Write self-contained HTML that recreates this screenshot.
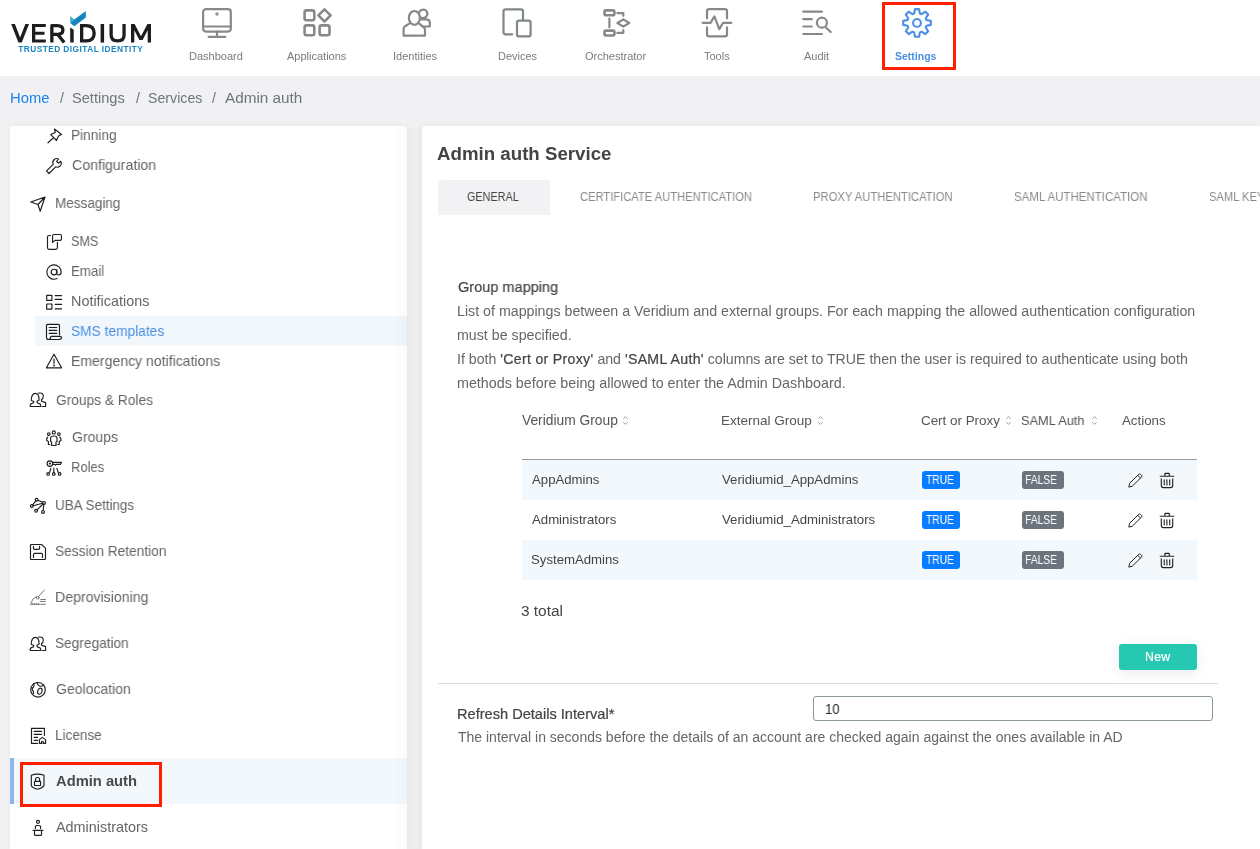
<!DOCTYPE html>
<html><head><meta charset="utf-8"><style>
html,body{margin:0;padding:0;width:1260px;height:849px;overflow:hidden;background:#f1f1f3;font-family:"Liberation Sans", sans-serif;}
.t{position:absolute;white-space:nowrap;line-height:1;will-change:transform;}
.r{position:absolute;}
.i{position:absolute;overflow:visible;}
</style></head><body>
<div class="r" style="left:0px;top:0px;width:1260px;height:76px;background:#ffffff;"></div>
<div class="r" style="left:0px;top:76px;width:1260px;height:773px;background:#f1f1f3;"></div>
<div class="r" style="left:407px;top:128px;width:15px;height:721px;background:#ededee;"></div>
<div class="r" style="left:10px;top:126px;width:397px;height:723px;background:#ffffff;border-radius:3px 3px 0 0;box-shadow:0 0 7px rgba(0,0,0,0.045);"></div>
<div class="r" style="left:422px;top:126px;width:838px;height:723px;background:#ffffff;border-radius:3px 0 0 0;box-shadow:0 0 7px rgba(0,0,0,0.045);"></div>
<svg class="i" style="left:0;top:0;will-change:transform" width="170" height="76" viewBox="0 0 170 76">
<g fill="#1d1d1f">
<path d="M11.2 24 H14.9 L20.1 37.6 L25.4 24 H29 L21.8 42.6 H18.4 Z"/>
<path d="M32 24 H45.8 V27 H35.3 V31.8 H44.5 V34.8 H35.3 V39.6 H45.8 V42.6 H32 Z"/>
<path d="M70.2 27.5 L73.7 29.8 V42.6 H70.2 Z"/>
<path d="M100.6 24 H104.1 V42.6 H100.6 Z"/>
<path d="M131 42.6 V24 H134.6 L141 36.3 L147.4 24 H151 V42.6 H147.7 V30.2 L142.6 40 H139.4 L134.3 30.2 V42.6 Z"/>
</g>
<g fill="none" stroke="#1d1d1f" stroke-width="3.3" stroke-linejoin="miter">
<path d="M51.85 42.6 V25.65 H57.3 Q62.9 25.65 62.9 30.1 Q62.9 34.4 57.3 34.4 H51.85 M57.8 34.4 L64.2 42.6" stroke-linejoin="round"/>
<path d="M81.65 25.65 H86 Q94.15 25.65 94.15 33.3 Q94.15 40.95 86 40.95 H81.65 Z"/>
<path d="M111.15 24 V35 Q111.15 40.95 117.6 40.95 Q124.05 40.95 124.05 35 V24"/>
</g>
<path d="M70.2 15.9 L74.3 19.6 L70.2 23 Z" fill="#35b2c8"/>
<path d="M70.2 23 L74.3 26.2 L85.8 17.6 V11.1 L74.3 19.6 Z" fill="#1683c0"/>
<text x="18.2" y="51.8" font-family="Liberation Sans" font-weight="700" font-size="8.3" fill="#1a86c0" textLength="124.6" lengthAdjust="spacing">TRUSTED DIGITAL IDENTITY</text>
</svg>
<svg class="i" style="left:192px;top:2px;" width="50" height="40" viewBox="0 0 50 40" fill="none" stroke="#888888" stroke-width="2.2" stroke-linecap="round" stroke-linejoin="round"><rect x="11.1" y="7.1" width="27.7" height="22.5" rx="3"/><path d="M11.1 24.5 H38.8 M25 29.6 V34.6 M16.7 34.8 H33.3"/><circle cx="25" cy="12" r="0.6" fill="#888888"/></svg>
<svg class="i" style="left:292px;top:2px;" width="50" height="40" viewBox="0 0 50 40" fill="none" stroke="#888888" stroke-width="2.2" stroke-linecap="round" stroke-linejoin="round"><g stroke-width="2.6"><rect x="12.6" y="8.4" width="9.7" height="9.9" rx="2"/><rect x="12.6" y="23.4" width="9.7" height="9.9" rx="2"/><rect x="27.6" y="23.4" width="9.9" height="9.9" rx="2"/><path d="M32.5 7.3 L38.6 13.4 L32.5 19.5 L26.4 13.4 Z"/></g></svg>
<svg class="i" style="left:395px;top:2px;" width="50" height="40" viewBox="0 0 50 40" fill="none" stroke="#888888" stroke-width="2.2" stroke-linecap="round" stroke-linejoin="round"><ellipse cx="19.4" cy="15.9" rx="5.5" ry="6.9"/><path d="M14.3 21.6 L10 24.3 Q8.6 25.3 8.6 27 V33.6 H30 V27.5 Q30 26.4 29 25.6 L24.6 21.9"/><path d="M24.2 10.4 A4.2 4.2 0 1 1 26.7 15.7 M26.3 17.3 H31.5 Q34.8 17.6 34.8 20.6 V24.5 H28.3"/></svg>
<svg class="i" style="left:495px;top:2px;" width="50" height="40" viewBox="0 0 50 40" fill="none" stroke="#80868a" stroke-width="2.2" stroke-linecap="round" stroke-linejoin="round"><path d="M17.2 32.3 H10.6 Q8.5 32.3 8.5 30.2 V9.4 Q8.5 7.3 10.6 7.3 H25.9 Q28 7.3 28 9.4 V17.5"/><rect x="22" y="18.6" width="13.6" height="15.8" rx="2"/></svg>
<svg class="i" style="left:595px;top:2px;" width="50" height="40" viewBox="0 0 50 40" fill="none" stroke="#888888" stroke-width="2.2" stroke-linecap="round" stroke-linejoin="round"><rect x="9.5" y="8.4" width="9.9" height="4.9" rx="1.5" stroke-width="2.6"/><rect x="9.5" y="28.6" width="9.9" height="4.9" rx="1.5" stroke-width="2.6"/><path d="M14.4 16.6 V25.3 M22.4 11.1 H28.3 V13.8 M28.3 28 V30.9 H22.4 M28.3 17.4 L34.2 21 L28.3 24.6 L22.4 21 Z"/></svg>
<svg class="i" style="left:692px;top:2px;" width="50" height="40" viewBox="0 0 50 40" fill="none" stroke="#888888" stroke-width="2.2" stroke-linecap="round" stroke-linejoin="round"><path d="M15 16.3 V9.3 Q15 7.1 17.2 7.1 H32.8 Q35 7.1 35 9.3 V16.3 M15 25.4 V32.2 Q15 34.4 17.2 34.4 H32.8 Q35 34.4 35 32.2 V25.4 M10.6 20.8 H18.6 L22.4 14.4 L27.3 27.1 L31.1 20.8 H39.3"/></svg>
<svg class="i" style="left:792px;top:2px;" width="50" height="40" viewBox="0 0 50 40" fill="none" stroke="#888888" stroke-width="2.2" stroke-linecap="round" stroke-linejoin="round"><path d="M11.3 9.7 H29.9 M11.3 17.2 H19.8 M11.3 24.5 H19.8 M11.3 32 H29.9 M34.2 25.7 L38.7 30"/><circle cx="29.9" cy="20.7" r="5"/></svg>
<svg class="i" style="left:892px;top:2px;" width="50" height="40" viewBox="0 0 50 40" fill="none" stroke="#4a90e2" stroke-width="2.1" stroke-linecap="round" stroke-linejoin="round"><path d="M22.10 11.43 L23.00 7.10 L27.00 7.10 L27.90 11.43 L29.64 12.16 L33.34 9.73 L36.17 12.56 L33.74 16.26 L34.47 18.00 L38.80 18.90 L38.80 22.90 L34.47 23.80 L33.74 25.54 L36.17 29.24 L33.34 32.07 L29.64 29.64 L27.90 30.37 L27.00 34.70 L23.00 34.70 L22.10 30.37 L20.36 29.64 L16.66 32.07 L13.83 29.24 L16.26 25.54 L15.53 23.80 L11.20 22.90 L11.20 18.90 L15.53 18.00 L16.26 16.26 L13.83 12.56 L16.66 9.73 L20.36 12.16 Z"/><circle cx="25" cy="20.9" r="3.9"/></svg>
<div class="t" style="left:189.18px;top:41px;font-size:11px;line-height:30px;color:#7b7b7b;">Dashboard</div>
<div class="t" style="left:287.24px;top:41px;font-size:11px;line-height:30px;color:#7b7b7b;">Applications</div>
<div class="t" style="left:392.76px;top:41px;font-size:11px;line-height:30px;color:#7b7b7b;">Identities</div>
<div class="t" style="left:497.58px;top:41px;font-size:11px;line-height:30px;color:#7b7b7b;">Devices</div>
<div class="t" style="left:585.37px;top:41px;font-size:11px;line-height:30px;color:#7b7b7b;">Orchestrator</div>
<div class="t" style="left:704.26px;top:41px;font-size:11px;line-height:30px;color:#7b7b7b;">Tools</div>
<div class="t" style="left:804.44px;top:41px;font-size:11px;line-height:30px;color:#7b7b7b;">Audit</div>
<div class="t" style="left:895.35px;top:41px;font-size:10.5px;line-height:30px;color:#4a90e2;font-weight:700;">Settings</div>
<div class="r" style="left:882px;top:2px;width:74px;height:68px;background:transparent;border:3px solid #ff1e00;box-sizing:border-box;"></div>
<div class="t" style="left:10.33px;top:83px;font-size:14.8px;line-height:30px;color:#1a82f7;">Home</div>
<div class="t" style="left:60.07px;top:83px;font-size:14.2px;line-height:30px;color:#6c757d;">/</div>
<div class="t" style="left:71.82px;top:83px;font-size:14.6px;line-height:30px;color:#6c757d;">Settings</div>
<div class="t" style="left:135.87px;top:83px;font-size:14.2px;line-height:30px;color:#6c757d;">/</div>
<div class="t" style="left:147.65px;top:83px;font-size:14.2px;line-height:30px;color:#6c757d;">Services</div>
<div class="t" style="left:212.27px;top:83px;font-size:14.2px;line-height:30px;color:#6c757d;">/</div>
<div class="t" style="left:224.58px;top:83px;font-size:15.3px;line-height:30px;color:#6c757d;">Admin auth</div>
<div class="r" style="left:35px;top:316px;width:372px;height:30px;background:#f2f7fc;"></div>
<div class="r" style="left:10px;top:758px;width:397px;height:46px;background:#f3f8fc;"></div>
<div class="r" style="left:10px;top:758px;width:4px;height:46px;background:#8db8ee;"></div>
<div class="r" style="left:393px;top:126px;width:14px;height:723px;background:linear-gradient(to right, rgba(0,0,0,0), rgba(0,0,0,0.018));"></div>
<div class="t" style="left:71.4px;top:120px;font-size:14.4px;line-height:30px;color:#656565;transform:scaleX(0.951);transform-origin:0 0;">Pinning</div>
<div class="t" style="left:71.82px;top:150px;font-size:14.4px;line-height:30px;color:#656565;transform:scaleX(0.983);transform-origin:0 0;">Configuration</div>
<div class="t" style="left:55.0px;top:188px;font-size:14.4px;line-height:30px;color:#656565;transform:scaleX(0.939);transform-origin:0 0;">Messaging</div>
<div class="t" style="left:71.0px;top:226px;font-size:14.4px;line-height:30px;color:#656565;transform:scaleX(0.88);transform-origin:0 0;">SMS</div>
<div class="t" style="left:71.0px;top:256px;font-size:14.4px;line-height:30px;color:#656565;transform:scaleX(0.925);transform-origin:0 0;">Email</div>
<div class="t" style="left:71.0px;top:286px;font-size:14.4px;line-height:30px;color:#656565;transform:scaleX(0.996);transform-origin:0 0;">Notifications</div>
<div class="t" style="left:70.69px;top:316px;font-size:14.4px;line-height:30px;color:#4a90e2;transform:scaleX(0.955);transform-origin:0 0;">SMS templates</div>
<div class="t" style="left:71.0px;top:346px;font-size:14.4px;line-height:30px;color:#656565;transform:scaleX(0.977);transform-origin:0 0;">Emergency notifications</div>
<div class="t" style="left:56.26px;top:385px;font-size:14.4px;line-height:30px;color:#656565;transform:scaleX(0.954);transform-origin:0 0;">Groups &amp; Roles</div>
<div class="t" style="left:71.83px;top:422px;font-size:14.4px;line-height:30px;color:#656565;transform:scaleX(0.974);transform-origin:0 0;">Groups</div>
<div class="t" style="left:71.42px;top:452px;font-size:14.4px;line-height:30px;color:#656565;transform:scaleX(0.904);transform-origin:0 0;">Roles</div>
<div class="t" style="left:55.05px;top:490px;font-size:14.4px;line-height:30px;color:#656565;transform:scaleX(0.933);transform-origin:0 0;">UBA Settings</div>
<div class="t" style="left:55.0px;top:536px;font-size:14.4px;line-height:30px;color:#656565;transform:scaleX(0.955);transform-origin:0 0;">Session Retention</div>
<div class="t" style="left:55.0px;top:582px;font-size:14.4px;line-height:30px;color:#656565;transform:scaleX(0.981);transform-origin:0 0;">Deprovisioning</div>
<div class="t" style="left:55.2px;top:628px;font-size:14.4px;line-height:30px;color:#656565;transform:scaleX(0.95);transform-origin:0 0;">Segregation</div>
<div class="t" style="left:55.63px;top:674px;font-size:14.4px;line-height:30px;color:#656565;transform:scaleX(0.975);transform-origin:0 0;">Geolocation</div>
<div class="t" style="left:55.2px;top:720px;font-size:14.4px;line-height:30px;color:#656565;transform:scaleX(0.941);transform-origin:0 0;">License</div>
<div class="t" style="left:56.15px;top:812px;font-size:14.4px;line-height:30px;color:#656565;">Administrators</div>
<div class="t" style="left:55.9px;top:766px;font-size:14.6px;line-height:30px;color:#4a4a4a;font-weight:700;transform:scaleX(1.009);transform-origin:0 0;">Admin auth</div>
<div class="r" style="left:20px;top:762px;width:142px;height:45px;background:transparent;border:3px solid #ff1e00;box-sizing:border-box;"></div>
<svg class="i" style="left:45.5px;top:127px;" width="18" height="18" viewBox="0 0 18 18" fill="none" stroke="#1e1e1e" stroke-width="1.15" stroke-linecap="round" stroke-linejoin="round"><path d="M8.5 2 L15.5 7.5 L12.5 9 L10.5 13.5 L4.8 7.6 L9.2 5.5 Z M7.5 10.8 L2 15.8"/></svg>
<svg class="i" style="left:45px;top:157px;" width="18" height="18" viewBox="0 0 18 18" fill="none" stroke="#1e1e1e" stroke-width="1.15" stroke-linecap="round" stroke-linejoin="round"><path d="M1.5 13.8 L8.2 7.3 A4 4 0 0 1 13.6 2 L11.6 4.6 L13.3 6.2 L15.8 4.3 A4 4 0 0 1 10.6 9.8 L4 16.5 Z"/></svg>
<svg class="i" style="left:29px;top:195px;" width="18" height="18" viewBox="0 0 18 18" fill="none" stroke="#1e1e1e" stroke-width="1.15" stroke-linecap="round" stroke-linejoin="round"><path d="M1.8 7 L16 2 L11.2 16.2 L9 9.5 Z M9 9.5 L16 2"/></svg>
<svg class="i" style="left:45px;top:232px;" width="18" height="18" viewBox="0 0 18 18" fill="none" stroke="#1e1e1e" stroke-width="1.15" stroke-linecap="round" stroke-linejoin="round"><path d="M5.5 3.5 H4 Q2.5 3.5 2.5 5 V15.8 Q2.5 17.3 4 17.3 H11 Q12.4 17.3 12.4 15.8 V10.3"/><path d="M7.6 10.4 V4 Q7.6 2.5 9 2.5 H15 Q16.5 2.5 16.5 4 V7 Q16.5 8.4 15 8.4 H10 L7.6 10.4 Z"/></svg>
<svg class="i" style="left:45px;top:263px;" width="18" height="18" viewBox="0 0 18 18" fill="none" stroke="#1e1e1e" stroke-width="1.15" stroke-linecap="round" stroke-linejoin="round"><circle cx="9" cy="9" r="2.8"/><path d="M11.8 6.5 V10.5 Q11.8 12 13.3 12 Q16.2 12 16.2 9 A7.2 7.2 0 1 0 12 15.6"/></svg>
<svg class="i" style="left:45px;top:293px;" width="18" height="18" viewBox="0 0 18 18" fill="none" stroke="#1e1e1e" stroke-width="1.15" stroke-linecap="round" stroke-linejoin="round"><rect x="1.7" y="2.4" width="5.2" height="5"/><rect x="1.7" y="11" width="5.2" height="5.1"/><path d="M10.2 2.6 H16.6 M10.2 6.4 H16.6 M10.2 11.3 H16.6 M10.2 15.8 H16.6"/></svg>
<svg class="i" style="left:45px;top:323px;" width="18" height="18" viewBox="0 0 18 18" fill="none" stroke="#1e1e1e" stroke-width="1.15" stroke-linecap="round" stroke-linejoin="round"><path d="M1.5 14.5 V2.4 Q1.5 1.4 2.5 1.4 H13.5 Q14.5 1.4 14.5 2.4 V11.7 M4.2 4.5 H11.7 M4.2 7.4 H11.7 M4.2 10.4 H11.7 M1.5 14.5 Q1.5 16.5 3.5 16.5 H14 Q16.5 16.5 16.5 14.3 Q16.5 13.3 15 13.3 H6.5 Q5.5 13.3 5.5 14.5 Q5.5 16.5 3.5 16.5"/></svg>
<svg class="i" style="left:45px;top:352px;" width="18" height="18" viewBox="0 0 18 18" fill="none" stroke="#1e1e1e" stroke-width="1.15" stroke-linecap="round" stroke-linejoin="round"><path d="M9 2.2 L16.6 15.8 H1.4 Z M9 7 V11.5"/><circle cx="9" cy="13.5" r="0.4"/></svg>
<svg class="i" style="left:29px;top:391px;" width="18" height="18" viewBox="0 0 18 18" fill="none" stroke="#1e1e1e" stroke-width="1.15" stroke-linecap="round" stroke-linejoin="round"><path d="M2.3 9.5 Q2.3 2.4 6.4 2.4 Q10.1 2.4 10.1 9.1 M2.3 9.5 L4.8 10.5 V11 Q4.8 12.2 3.3 12.4 Q1.2 12.8 1.2 14.3 V15.5 H11.7 V14.3 Q11.7 12.8 9.6 12.4 Q8 12.2 8 11 V10.3 L10.1 9.1 M9.7 2.1 Q14.3 1.3 14.3 5.2 Q14.3 7.5 12.5 8.4 V10.2 L16.6 11.6 V15.5 H13.3"/></svg>
<svg class="i" style="left:45px;top:429px;" width="18" height="18" viewBox="0 0 18 18" fill="none" stroke="#1e1e1e" stroke-width="1.15" stroke-linecap="round" stroke-linejoin="round"><circle cx="8.8" cy="3.4" r="1.6"/><circle cx="3.8" cy="5" r="1.3"/><circle cx="13.9" cy="5" r="1.3"/><path d="M5.6 9 Q5.6 7 8.8 7 Q12 7 12 9 V12.5 L11 13 V16.5 H6.6 V13 L5.6 12.5 Z M2.8 8 Q1.3 9.5 1.6 11.5 L3.4 12.5 V15.5 H4.8 M14.8 8 Q16.3 9.5 16 11.5 L14.2 12.5 V15.5 H12.8"/></svg>
<svg class="i" style="left:45px;top:459px;" width="18" height="18" viewBox="0 0 18 18" fill="none" stroke="#1e1e1e" stroke-width="1.15" stroke-linecap="round" stroke-linejoin="round"><circle cx="4.9" cy="4.6" r="2.8"/><circle cx="4.9" cy="4.6" r="0.5" fill="#1e1e1e"/><path d="M7.6 3.3 H16.5 L15.5 5.3 H11.2 L10.4 6.1 L9.7 5.4 H7.6 M5.9 9.4 L4.6 13.4 M8.8 9 V13.4 M11.9 9.4 L13.2 13.4"/><circle cx="3.1" cy="14.9" r="1.3"/><circle cx="8.8" cy="14.9" r="1.3"/><circle cx="14.6" cy="14.9" r="1.3"/></svg>
<svg class="i" style="left:29px;top:497px;" width="18" height="18" viewBox="0 0 18 18" fill="none" stroke="#1e1e1e" stroke-width="1.15" stroke-linecap="round" stroke-linejoin="round"><circle cx="7.6" cy="2.7" r="1.4"/><circle cx="15" cy="5.9" r="1.4"/><circle cx="2.8" cy="9" r="1.4"/><circle cx="7.1" cy="13.8" r="1.4"/><circle cx="14" cy="14.9" r="1.4"/><path d="M8.9 3.3 L13.6 5.3 M6.8 3.9 L3.6 7.9 M4.2 8.7 L13.6 6.2 M14 7 L8.1 12.8 M14.9 7.3 L14.1 13.5"/></svg>
<svg class="i" style="left:29px;top:543px;" width="18" height="18" viewBox="0 0 18 18" fill="none" stroke="#1e1e1e" stroke-width="1.15" stroke-linecap="round" stroke-linejoin="round"><path d="M2.5 1.5 H12.5 L16.5 5.2 V15.5 Q16.5 16.5 15.5 16.5 H2.5 Q1.5 16.5 1.5 15.5 V2.5 Q1.5 1.5 2.5 1.5 Z M4.5 3.2 V5.5 Q4.5 6.3 5.5 6.3 H9.6 Q10.6 6.3 10.6 5.5 V3.2 M4.5 14.5 V11.4 Q4.5 10.4 5.5 10.4 H12.5 Q13.5 10.4 13.5 11.4 V14.5"/></svg>
<svg class="i" style="left:29px;top:589px;" width="18" height="18" viewBox="0 0 18 18" fill="none" stroke="#777" stroke-width="1.0" stroke-linecap="round" stroke-linejoin="round"><path d="M15.4 1.1 L9.7 7.3 M7.6 7.5 Q3 9 1.9 14.2 M1.6 15.3 H10.8 M3.2 14.3 V15.3 M5.2 14.3 V15.3 M7.2 14.3 V15.3 M9.2 14.3 V15.3 M11.8 10.5 H16.4 M11.2 12.4 H16.4 M11.8 15.3 H16.4"/><circle cx="8.7" cy="8.7" r="1.4"/></svg>
<svg class="i" style="left:29px;top:635px;" width="18" height="18" viewBox="0 0 18 18" fill="none" stroke="#1e1e1e" stroke-width="1.15" stroke-linecap="round" stroke-linejoin="round"><path d="M2.3 9.5 Q2.3 2.4 6.4 2.4 Q10.1 2.4 10.1 9.1 M2.3 9.5 L4.8 10.5 V11 Q4.8 12.2 3.3 12.4 Q1.2 12.8 1.2 14.3 V15.5 H11.7 V14.3 Q11.7 12.8 9.6 12.4 Q8 12.2 8 11 V10.3 L10.1 9.1 M9.7 2.1 Q14.3 1.3 14.3 5.2 Q14.3 7.5 12.5 8.4 V10.2 L16.6 11.6 V15.5 H13.3"/></svg>
<svg class="i" style="left:29px;top:681px;" width="18" height="18" viewBox="0 0 18 18" fill="none" stroke="#1e1e1e" stroke-width="1.15" stroke-linecap="round" stroke-linejoin="round"><circle cx="9" cy="8.8" r="7.3"/><path d="M8 1.7 Q9 5 11 5.2 Q13.5 5.3 14.8 3.8 M4.7 2.6 Q5.8 4.5 4.5 6 Q2.5 7.5 3.5 9 Q4.8 10 4.5 12.5"/><ellipse cx="10.9" cy="10.2" rx="2.1" ry="3.1" transform="rotate(20 10.9 10.2)"/></svg>
<svg class="i" style="left:29px;top:727px;" width="18" height="18" viewBox="0 0 18 18" fill="none" stroke="#1e1e1e" stroke-width="1.15" stroke-linecap="round" stroke-linejoin="round"><path d="M8.5 16.4 H2.5 V1.4 H15.4 V8.4 M5.2 4.4 H12.6 M5.2 7.4 H12.6 M5.2 10.4 H8.5 M5.2 13.4 H8.5 M10.4 16.4 V12.6 L13.4 10.4 L16.6 12.6 V16.4 H14.2 V14.6 Q13.4 13.8 12.6 14.6 V16.4 Z"/></svg>
<svg class="i" style="left:29px;top:772px;" width="18" height="18" viewBox="0 0 18 18" fill="none" stroke="#1e1e1e" stroke-width="1.15" stroke-linecap="round" stroke-linejoin="round"><path d="M2.3 3.3 Q8.5 0.8 15 3.3 V13.3 Q14 16 8.6 17.2 Q3 16 2.3 13.3 Z M6.5 9.4 V7.5 Q6.5 5.5 8.6 5.5 Q10.6 5.5 10.6 7.5 V9.4"/><rect x="5.5" y="9.4" width="6.1" height="4.1" rx="0.6"/></svg>
<svg class="i" style="left:29px;top:818px;" width="18" height="18" viewBox="0 0 18 18" fill="none" stroke="#1e1e1e" stroke-width="1.15" stroke-linecap="round" stroke-linejoin="round"><circle cx="9" cy="3.8" r="1.5"/><path d="M6.4 10.5 V8.5 Q6.4 7.5 8 7.5 H10 Q11.6 7.5 11.6 8.5 V10.5 M4.1 12.4 H13.8 M5.5 12.4 V16.4 Q5.5 17.4 6.5 17.4 H11.5 Q12.5 17.4 12.5 16.4 V12.4"/></svg>
<div class="t" style="left:437.21px;top:139px;font-size:18.7px;line-height:30px;color:#444;font-weight:700;">Admin auth Service</div>
<div class="r" style="left:438px;top:180px;width:112px;height:35px;background:#f2f2f4;border-radius:3px 3px 0 0;"></div>
<div class="t" style="left:467.39px;top:182px;font-size:12px;line-height:30px;color:#444;transform:scaleX(0.902);transform-origin:0 0;">GENERAL</div>
<div class="t" style="left:580.04px;top:182px;font-size:12px;line-height:30px;color:#8a8a8a;transform:scaleX(0.931);transform-origin:0 0;">CERTIFICATE AUTHENTICATION</div>
<div class="t" style="left:812.7px;top:182px;font-size:12px;line-height:30px;color:#8a8a8a;transform:scaleX(0.937);transform-origin:0 0;">PROXY AUTHENTICATION</div>
<div class="t" style="left:1013.66px;top:182px;font-size:12px;line-height:30px;color:#8a8a8a;transform:scaleX(0.958);transform-origin:0 0;">SAML AUTHENTICATION</div>
<div class="t" style="left:1208.66px;top:182px;font-size:12px;line-height:30px;color:#8a8a8a;transform:scaleX(0.93);transform-origin:0 0;">SAML KEYS</div>
<div class="t" style="left:458.26px;top:272px;font-size:14.6px;line-height:30px;color:#444;-webkit-text-stroke:0.22px #444;transform:scaleX(0.995);transform-origin:0 0;">Group mapping</div>
<div class="t" style="left:456.78px;top:296px;font-size:14.23px;line-height:30px;color:#63666a;">List of mappings between a Veridium and external groups. For each mapping the allowed authentication configuration</div>
<div class="t" style="left:457.08px;top:320px;font-size:14.23px;line-height:30px;color:#63666a;">must be specified.</div>
<div class="t" style="left:457.46px;top:344px;font-size:14.15px;line-height:30px;color:#63666a;">If both <span style='color:#444;-webkit-text-stroke:0.22px #444;letter-spacing:0.3px'>'Cert or Proxy'</span> and <span style='color:#444;-webkit-text-stroke:0.22px #444;letter-spacing:0.3px'>'SAML Auth'</span> columns are set to TRUE then the user is required to authenticate using both</div>
<div class="t" style="left:457.08px;top:368px;font-size:14.3px;line-height:30px;color:#63666a;">methods before being allowed to enter the Admin Dashboard.</div>
<div class="t" style="left:521.77px;top:406px;font-size:13.8px;line-height:30px;color:#555;">Veridium Group</div>
<svg class="i" style="left:621.5px;top:414px;" width="7" height="13" viewBox="0 0 7 13" fill="none" stroke="#a0a0a0" stroke-width="1.0" stroke-linecap="round" stroke-linejoin="round"><path d="M1.6 4.6 L3.5 2.6 L5.4 4.6 M1.6 8.4 L3.5 10.4 L5.4 8.4"/></svg>
<div class="t" style="left:721.12px;top:406px;font-size:13.5px;line-height:30px;color:#555;">External Group</div>
<svg class="i" style="left:816.5px;top:414px;" width="7" height="13" viewBox="0 0 7 13" fill="none" stroke="#a0a0a0" stroke-width="1.0" stroke-linecap="round" stroke-linejoin="round"><path d="M1.6 4.6 L3.5 2.6 L5.4 4.6 M1.6 8.4 L3.5 10.4 L5.4 8.4"/></svg>
<div class="t" style="left:921.49px;top:406px;font-size:13.4px;line-height:30px;color:#555;">Cert or Proxy</div>
<svg class="i" style="left:1004.5px;top:414px;" width="7" height="13" viewBox="0 0 7 13" fill="none" stroke="#a0a0a0" stroke-width="1.0" stroke-linecap="round" stroke-linejoin="round"><path d="M1.6 4.6 L3.5 2.6 L5.4 4.6 M1.6 8.4 L3.5 10.4 L5.4 8.4"/></svg>
<div class="t" style="left:1020.8px;top:406px;font-size:13.4px;line-height:30px;color:#555;transform:scaleX(0.955);transform-origin:0 0;">SAML Auth</div>
<svg class="i" style="left:1090.5px;top:414px;" width="7" height="13" viewBox="0 0 7 13" fill="none" stroke="#a0a0a0" stroke-width="1.0" stroke-linecap="round" stroke-linejoin="round"><path d="M1.6 4.6 L3.5 2.6 L5.4 4.6 M1.6 8.4 L3.5 10.4 L5.4 8.4"/></svg>
<div class="t" style="left:1121.79px;top:406px;font-size:13.3px;line-height:30px;color:#555;">Actions</div>
<div class="r" style="left:522px;top:459px;width:675px;height:1px;background:#999;"></div>
<div class="r" style="left:522px;top:460px;width:675px;height:40px;background:#f3f8fd;"></div>
<div class="r" style="left:522px;top:540px;width:675px;height:40px;background:#f3f8fd;"></div>
<div class="t" style="left:531.83px;top:465px;font-size:13.2px;line-height:30px;color:#444;">AppAdmins</div>
<div class="t" style="left:721.8px;top:465px;font-size:13.2px;line-height:30px;color:#444;">Veridiumid_AppAdmins</div>
<div class="r" style="left:922px;top:471px;width:38px;height:18px;background:#0a7cff;border-radius:3px;"></div>
<div class="t" style="left:925.78px;top:465px;font-size:12.4px;line-height:30px;color:#fff;transform:scaleX(0.83);transform-origin:0 0;">TRUE</div>
<div class="r" style="left:1022px;top:471px;width:42px;height:18px;background:#6c757d;border-radius:3px;"></div>
<div class="t" style="left:1025.22px;top:465px;font-size:12.4px;line-height:30px;color:#fff;transform:scaleX(0.83);transform-origin:0 0;">FALSE</div>
<svg class="i" style="left:1126px;top:471px;" width="18" height="18" viewBox="0 0 18 18" fill="none" stroke="#222" stroke-width="1.0" stroke-linecap="round" stroke-linejoin="round"><path d="M2.9 15.7 L3.7 12.3 L12.8 3.2 Q13.6 2.5 14.4 3.2 L15.6 4.4 Q16.3 5.2 15.6 6 L6.5 15 Z M11.7 4.3 L14.5 7.1"/></svg>
<svg class="i" style="left:1158px;top:471px;" width="18" height="18" viewBox="0 0 18 18" fill="none" stroke="#222" stroke-width="1.15" stroke-linecap="round" stroke-linejoin="round"><path d="M2.2 5.2 H15.8 M6.9 5.2 V2.8 Q6.9 2.3 7.4 2.3 H10.8 Q11.3 2.3 11.3 2.8 V5.2 M3.3 7.7 V14.6 Q3.3 16.6 5.3 16.6 H12.7 Q14.7 16.6 14.7 14.6 V7.7"/><path d="M6.2 8.8 V13.9 M8.9 8.8 V13.9 M11.7 8.8 V13.9" stroke-width="1.1"/></svg>
<div class="t" style="left:531.87px;top:505px;font-size:13.2px;line-height:30px;color:#444;">Administrators</div>
<div class="t" style="left:721.83px;top:505px;font-size:13.2px;line-height:30px;color:#444;">Veridiumid_Administrators</div>
<div class="r" style="left:922px;top:511px;width:38px;height:18px;background:#0a7cff;border-radius:3px;"></div>
<div class="t" style="left:925.78px;top:505px;font-size:12.4px;line-height:30px;color:#fff;transform:scaleX(0.83);transform-origin:0 0;">TRUE</div>
<div class="r" style="left:1022px;top:511px;width:42px;height:18px;background:#6c757d;border-radius:3px;"></div>
<div class="t" style="left:1025.22px;top:505px;font-size:12.4px;line-height:30px;color:#fff;transform:scaleX(0.83);transform-origin:0 0;">FALSE</div>
<svg class="i" style="left:1126px;top:511px;" width="18" height="18" viewBox="0 0 18 18" fill="none" stroke="#222" stroke-width="1.0" stroke-linecap="round" stroke-linejoin="round"><path d="M2.9 15.7 L3.7 12.3 L12.8 3.2 Q13.6 2.5 14.4 3.2 L15.6 4.4 Q16.3 5.2 15.6 6 L6.5 15 Z M11.7 4.3 L14.5 7.1"/></svg>
<svg class="i" style="left:1158px;top:511px;" width="18" height="18" viewBox="0 0 18 18" fill="none" stroke="#222" stroke-width="1.15" stroke-linecap="round" stroke-linejoin="round"><path d="M2.2 5.2 H15.8 M6.9 5.2 V2.8 Q6.9 2.3 7.4 2.3 H10.8 Q11.3 2.3 11.3 2.8 V5.2 M3.3 7.7 V14.6 Q3.3 16.6 5.3 16.6 H12.7 Q14.7 16.6 14.7 14.6 V7.7"/><path d="M6.2 8.8 V13.9 M8.9 8.8 V13.9 M11.7 8.8 V13.9" stroke-width="1.1"/></svg>
<div class="t" style="left:531.0px;top:545px;font-size:13.2px;line-height:30px;color:#444;">SystemAdmins</div>
<div class="r" style="left:922px;top:551px;width:38px;height:18px;background:#0a7cff;border-radius:3px;"></div>
<div class="t" style="left:925.78px;top:545px;font-size:12.4px;line-height:30px;color:#fff;transform:scaleX(0.83);transform-origin:0 0;">TRUE</div>
<div class="r" style="left:1022px;top:551px;width:42px;height:18px;background:#6c757d;border-radius:3px;"></div>
<div class="t" style="left:1025.22px;top:545px;font-size:12.4px;line-height:30px;color:#fff;transform:scaleX(0.83);transform-origin:0 0;">FALSE</div>
<svg class="i" style="left:1126px;top:551px;" width="18" height="18" viewBox="0 0 18 18" fill="none" stroke="#222" stroke-width="1.0" stroke-linecap="round" stroke-linejoin="round"><path d="M2.9 15.7 L3.7 12.3 L12.8 3.2 Q13.6 2.5 14.4 3.2 L15.6 4.4 Q16.3 5.2 15.6 6 L6.5 15 Z M11.7 4.3 L14.5 7.1"/></svg>
<svg class="i" style="left:1158px;top:551px;" width="18" height="18" viewBox="0 0 18 18" fill="none" stroke="#222" stroke-width="1.15" stroke-linecap="round" stroke-linejoin="round"><path d="M2.2 5.2 H15.8 M6.9 5.2 V2.8 Q6.9 2.3 7.4 2.3 H10.8 Q11.3 2.3 11.3 2.8 V5.2 M3.3 7.7 V14.6 Q3.3 16.6 5.3 16.6 H12.7 Q14.7 16.6 14.7 14.6 V7.7"/><path d="M6.2 8.8 V13.9 M8.9 8.8 V13.9 M11.7 8.8 V13.9" stroke-width="1.1"/></svg>
<div class="t" style="left:521.34px;top:596px;font-size:15.4px;line-height:30px;color:#444;">3 total</div>
<div class="r" style="left:1118.8px;top:643.8px;width:78.4px;height:26.2px;background:#26c8b2;border-radius:3px;box-shadow:0 3px 14px rgba(0,0,0,0.085);"></div>
<div class="t" style="left:1144.89px;top:642px;font-size:12.3px;line-height:30px;color:#fff;-webkit-text-stroke:0.22px #fff;letter-spacing:0.25px;">New</div>
<div class="r" style="left:438px;top:683px;width:780px;height:1px;background:#dcdcdc;"></div>
<div class="t" style="left:456.84px;top:699px;font-size:14.6px;line-height:30px;color:#444;-webkit-text-stroke:0.22px #444;">Refresh Details Interval*</div>
<div class="t" style="left:458.26px;top:722px;font-size:14.0px;line-height:30px;color:#63666a;">The interval in seconds before the details of an account are checked again against the ones available in AD</div>
<div class="r" style="left:813.3px;top:696.3px;width:399.5px;height:24.3px;background:#fff;border:1px solid #8c9a9a;border-radius:3px;box-sizing:border-box;"></div>
<div class="t" style="left:825.2px;top:694px;font-size:14px;line-height:30px;color:#2a2a2a;transform:scaleX(0.94);transform-origin:0 0;">10</div>
</body></html>
